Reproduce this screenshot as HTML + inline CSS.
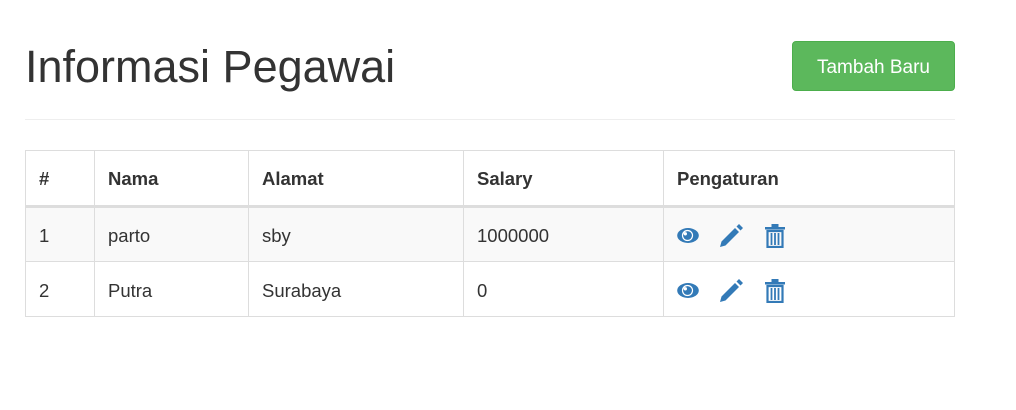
<!DOCTYPE html>
<html><head><style>
body{margin:0;background:#fff;font-family:"Liberation Sans",Arial,sans-serif;color:#333;width:1016px;height:410px;position:relative;overflow:hidden}
h1{position:absolute;left:25px;top:39px;margin:0;font-size:45px;font-weight:400;line-height:56px;color:#333}
.btn{position:absolute;left:792px;top:41px;width:163px;height:50px;background:#5cb85c;border:1px solid #4cae4c;box-sizing:border-box;border-radius:4px;color:#fff;font-size:19px;line-height:52px;text-align:center}
.hr{position:absolute;left:25px;top:119px;width:930px;height:1px;background:#eee}
table{position:absolute;left:25px;top:150px;width:930px;border-collapse:collapse;font-size:18.5px;table-layout:fixed}
td,th{border:1px solid #ddd;padding:3px 0 0 13px;text-align:left;height:50px;box-sizing:border-box}
th{height:56px;border-bottom:3px solid #ddd;font-weight:700;padding-top:2px}
td{height:55px}
tr.s td{background:#f9f9f9}
.ic{position:relative;height:24px}
.ic svg{position:absolute;top:0}
</style></head><body>
<h1>Informasi Pegawai</h1>
<div class="btn">Tambah Baru</div>
<div class="hr"></div>
<table>
<colgroup><col style="width:69px"><col style="width:154px"><col style="width:215px"><col style="width:200px"><col></colgroup>
<tr><th>#</th><th>Nama</th><th>Alamat</th><th>Salary</th><th>Pengaturan</th></tr>
<tr class="s"><td>1</td><td>parto</td><td>sby</td><td>1000000</td><td><div class="ic">
<svg style="left:0;top:3px" width="22" height="17" viewBox="0 0 22 17"><ellipse cx="11" cy="8.5" rx="10.8" ry="7.5" fill="#337ab7"/><circle cx="10.5" cy="8.5" r="5.6" fill="#fff"/><circle cx="10.5" cy="8.5" r="4.4" fill="#337ab7"/><circle cx="8.3" cy="6.8" r="1.7" fill="#fff"/></svg>
<svg style="left:42px" width="24" height="24" viewBox="0 0 24 24"><path d="M1 23L2.5 17.5L16 4L20 8L6.5 21.5Z M17.5 2.5L20 0L24 4L21.5 6.5Z" fill="#337ab7"/></svg>
<svg style="left:88px" width="20" height="24" viewBox="0 0 20 24"><path d="M0 3H20V5.5H0Z M6.5 0H13.5V3H6.5Z" fill="#337ab7"/><path d="M2.5 7H17.5V23H2.5Z" fill="none" stroke="#337ab7" stroke-width="2.2"/><path d="M6.5 9V21M10 9V21M13.5 9V21" stroke="#337ab7" stroke-width="1.8"/></svg>
</div></td></tr>
<tr><td>2</td><td>Putra</td><td>Surabaya</td><td>0</td><td><div class="ic">
<svg style="left:0;top:3px" width="22" height="17" viewBox="0 0 22 17"><ellipse cx="11" cy="8.5" rx="10.8" ry="7.5" fill="#337ab7"/><circle cx="10.5" cy="8.5" r="5.6" fill="#fff"/><circle cx="10.5" cy="8.5" r="4.4" fill="#337ab7"/><circle cx="8.3" cy="6.8" r="1.7" fill="#fff"/></svg>
<svg style="left:42px" width="24" height="24" viewBox="0 0 24 24"><path d="M1 23L2.5 17.5L16 4L20 8L6.5 21.5Z M17.5 2.5L20 0L24 4L21.5 6.5Z" fill="#337ab7"/></svg>
<svg style="left:88px" width="20" height="24" viewBox="0 0 20 24"><path d="M0 3H20V5.5H0Z M6.5 0H13.5V3H6.5Z" fill="#337ab7"/><path d="M2.5 7H17.5V23H2.5Z" fill="none" stroke="#337ab7" stroke-width="2.2"/><path d="M6.5 9V21M10 9V21M13.5 9V21" stroke="#337ab7" stroke-width="1.8"/></svg>
</div></td></tr>
</table>
</body></html>
